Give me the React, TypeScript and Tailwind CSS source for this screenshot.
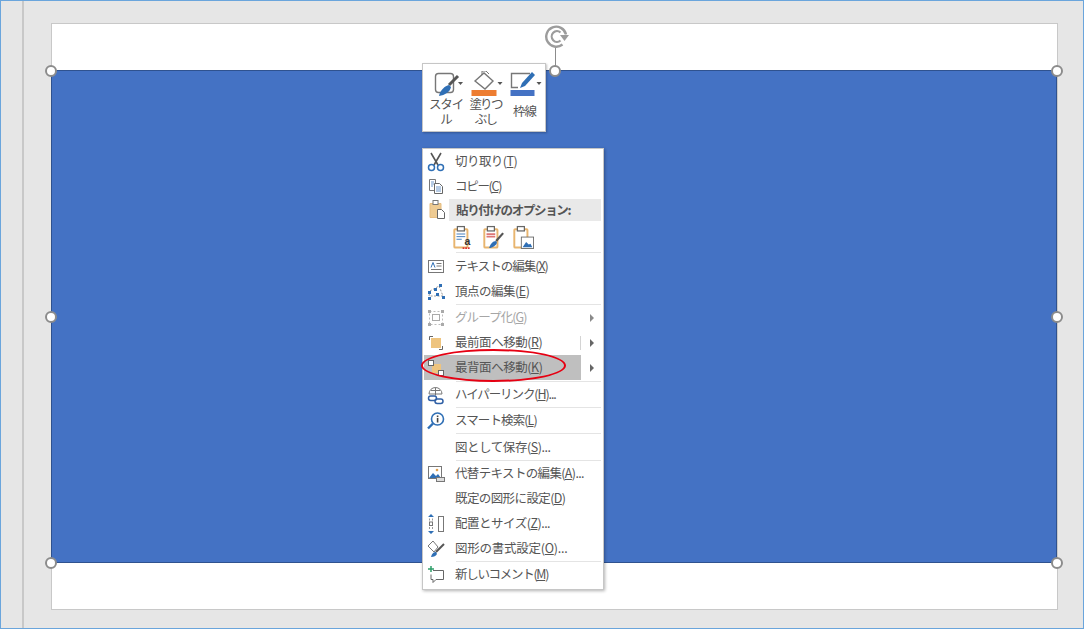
import React from "react";

const JP = "[font-family:'Noto_Sans_CJK_JP','Noto_Sans',sans-serif]";

const Clip = ({ children }: { children?: React.ReactNode }) => (
  <svg width="21" height="25" viewBox="0 0 24 28" className="shrink-0">
    <rect x="1.500" y="4.500" width="15" height="21" rx="1" fill="#fff" stroke="#e8b56f" strokeWidth="2.200" />
    <rect x="5" y="1.500" width="8" height="5" fill="#fff" stroke="#666" strokeWidth="1.400" />
    {children}
  </svg>
);

const icons: Record<string, React.ReactNode> = {
  cut: (
    <svg width="20" height="20" viewBox="0 0 20 20">
      <path d="M5 1l7 12M15 1L8 13" stroke="#555" strokeWidth="1.600" fill="none" />
      <circle cx="5.500" cy="15.500" r="3" fill="none" stroke="#2f6fb5" strokeWidth="1.500" />
      <circle cx="14.500" cy="15.500" r="3" fill="none" stroke="#2f6fb5" strokeWidth="1.500" />
    </svg>
  ),
  copy: (
    <svg width="20" height="20" viewBox="0 0 20 20">
      <path d="M3.500 2.500h6v11h-6z" fill="#fff" stroke="#777" />
      <path d="M8.500 6.500h5l3 3v7h-8z" fill="#fff" stroke="#666" />
      <path d="M10 10h5M10 12h5M10 14h5M5 5h3M5 7h3M5 9h2" stroke="#6f97c9" />
    </svg>
  ),
  paste: (
    <svg width="20" height="22" viewBox="0 0 20 22">
      <path d="M3 4.500h11v14H3z" fill="#eecb93" stroke="#e6bd80" />
      <rect x="6" y="1.500" width="5" height="4" fill="#fff" stroke="#777" />
      <path d="M10.500 10.500h4l3 3v6h-7z" fill="#fff" stroke="#666" />
    </svg>
  ),
  text: (
    <svg width="20" height="18" viewBox="0 0 20 18">
      <rect x="2.500" y="2.500" width="15" height="12" fill="#fff" stroke="#777" />
      <path d="M5 9.500l2-5 2 5" stroke="#2f6fb5" fill="none" />
      <path d="M10.500 5.500h5M10.500 8h5M5 11.500h10.500" stroke="#777" />
    </svg>
  ),
  nodes: (
    <svg width="20" height="20" viewBox="0 0 20 20">
      <path d="M4 9l9-5 4 10H3z" fill="none" stroke="#999" strokeDasharray="2 1.500" />
      <g fill="#2f6fb5">
        <rect x="2" y="9" width="3" height="3" />
        <rect x="13" y="2" width="3" height="3" />
        <rect x="16" y="14" width="3" height="3" />
        <rect x="2" y="15" width="3" height="3" />
        <rect x="8" y="6" width="3" height="3" />
        <rect x="10" y="11" width="3" height="3" />
      </g>
    </svg>
  ),
  group: (
    <svg width="20" height="20" viewBox="0 0 20 20">
      <rect x="3.500" y="3.500" width="13" height="13" fill="none" stroke="#bbb" strokeDasharray="2 2" />
      <rect x="6.500" y="6.500" width="7" height="6" fill="none" stroke="#aaa" />
      <g fill="#aaa">
        <rect x="2" y="2" width="3" height="3" />
        <rect x="15" y="2" width="3" height="3" />
        <rect x="2" y="15" width="3" height="3" />
        <rect x="15" y="15" width="3" height="3" />
      </g>
    </svg>
  ),
  front: (
    <svg width="20" height="20" viewBox="0 0 20 20">
      <path d="M3.500 7V3.500H7M13 16.500h3.500V13" fill="none" stroke="#666" />
      <rect x="5" y="5" width="10" height="10" fill="#eec47f" />
    </svg>
  ),
  back: (
    <svg width="20" height="20" viewBox="0 0 20 20">
      <rect x="6" y="6" width="9" height="9" fill="#eec47f" />
      <rect x="2.500" y="2.500" width="5" height="5" fill="#fff" stroke="#666" />
      <rect x="12.500" y="12.500" width="5" height="5" fill="#fff" stroke="#666" />
    </svg>
  ),
  link: (
    <svg width="20" height="22" viewBox="0 0 20 22">
      <path d="M3 10a6.500 6.500 0 0 1 13 0M9.500 3.500v8M5 6.500h9M3 10h13" fill="none" stroke="#777" />
      <rect x="2.500" y="12" width="8" height="4.500" rx="2.200" fill="none" stroke="#2f5fa5" strokeWidth="1.500" />
      <rect x="9" y="15" width="8" height="4.500" rx="2.200" fill="none" stroke="#2f5fa5" strokeWidth="1.500" />
    </svg>
  ),
  search: (
    <svg width="20" height="20" viewBox="0 0 20 20">
      <circle cx="11.500" cy="8" r="6" fill="#fff" stroke="#2f6fb5" strokeWidth="1.600" />
      <path d="M7 12.500l-5 5" stroke="#2f6fb5" strokeWidth="2.400" />
      <rect x="10.800" y="7" width="1.600" height="4.500" fill="#444" />
      <rect x="10.800" y="4.500" width="1.600" height="1.600" fill="#444" />
    </svg>
  ),
  alt: (
    <svg width="20" height="20" viewBox="0 0 20 20">
      <rect x="2.500" y="2.500" width="13" height="12" fill="#fff" stroke="#777" />
      <path d="M3 14l4-5 3 3 2-2 3 4z" fill="#2f6fb5" />
      <circle cx="11" cy="6" r="1.300" fill="#e0a050" />
      <rect x="10.500" y="13.500" width="8" height="4" fill="#ddd" stroke="#777" />
    </svg>
  ),
  size: (
    <svg width="20" height="22" viewBox="0 0 20 22">
      <path d="M5 1l-3 3h6zM5 21l-3-3h6z" fill="#2f6fb5" />
      <rect x="3.500" y="9" width="3" height="3.500" fill="none" stroke="#777" />
      <path d="M3.500 5.500v2M6.500 5.500v2M3.500 14v2M6.500 14v2" stroke="#999" />
      <rect x="12.500" y="3.500" width="5" height="15" fill="#fff" stroke="#777" />
    </svg>
  ),
  format: (
    <svg width="20" height="20" viewBox="0 0 20 20">
      <path d="M2 7l5-5 5 6-4 5z" fill="#fff" stroke="#777" />
      <path d="M18 5l-8 8" stroke="#555" strokeWidth="2" />
      <path d="M5 18c1-4 3-5 5-5l1 2c-1 2-3 3-6 3z" fill="#2f6fb5" />
    </svg>
  ),
  comment: (
    <svg width="20" height="20" viewBox="0 0 20 20">
      <path d="M7 5.500h10.500v9H10l-3 3v-3H5v-5" fill="#fff" stroke="#666" />
      <path d="M5 1v6M2 4h6" stroke="#2e9e6a" strokeWidth="1.500" />
    </svg>
  ),
};

type RowProps = {
  icon?: string;
  label: string;
  keyChar: string;
  tail?: string;
  track: string;
  h?: string;
  arrow?: boolean;
  disabled?: boolean;
  split?: boolean;
  active?: boolean;
};

const Row = ({ icon, label, keyChar, tail, track, h = "h-[25px]", arrow, disabled, split, active }: RowProps) => (
  <div className={`flex items-center pl-[1px] ${h}`}>
    <div className={`flex flex-1 h-full items-center ${active ? "bg-[#bfbfbf]" : ""}`}>
      <div className="w-[31px] shrink-0 flex items-center justify-center pr-[8px]">{icon ? icons[icon] : null}</div>
      <span className={`text-[12.5px] whitespace-nowrap ${track} ${disabled ? "text-[#a6a6a6]" : "text-[#555]"}`}>
        {label}(<span className="underline">{keyChar}</span>){tail}
      </span>
      <div className="flex-1" />
      {split && <div className="w-px h-[14px] bg-[#d4d4d4]" />}
    </div>
    {arrow ? (
      <div className="w-[21px] shrink-0 h-full flex items-center justify-center mr-[1px]">
        <div className={`w-0 h-0 border-y-[4px] border-y-transparent border-l-[4px] ${disabled ? "border-l-[#8a8a8a]" : "border-l-[#666]"}`} />
      </div>
    ) : null}
  </div>
);

const Sep = () => <div className="h-px ml-[33px] mr-[2px] bg-[#e4e4e4]" />;

const Handle = ({ pos }: { pos: string }) => (
  <div className={`absolute w-[12px] h-[12px] rounded-full bg-white border-2 border-[#8c8c8c] ${pos}`} />
);

const ToolBtn = ({ w, children, label, mt, track }: { w: string; children: React.ReactNode; label: React.ReactNode; mt: string; track: string }) => (
  <div className={`flex flex-col items-center ${w}`}>
    {children}
    <div className={`text-[12.5px] leading-[15px] text-center text-[#555] whitespace-nowrap ${track} ${mt}`}>{label}</div>
  </div>
);

export default function App() {
  return (
    <div className={`relative w-[1084px] h-[629px] overflow-hidden bg-[#e6e6e6] border border-[#6aa5dc] flex ${JP}`}>
      <div className="w-[23px] shrink-0 border-r-2 border-[#c8c8c8]" />
      <div className="pl-[27px] pt-[22px]">
        <div className="relative w-[1007px] h-[587px] bg-white border border-[#c8c8c8] pt-[46px]">
          <div className="h-[493px] -ml-px bg-[#4472c4] border border-[#2f528f]" />
          <Handle pos="left-[-7px] top-[41px]" />
          <Handle pos="left-[497px] top-[41px]" />
          <Handle pos="right-[-6px] top-[41px]" />
          <Handle pos="left-[-7px] top-[287px]" />
          <Handle pos="right-[-6px] top-[287px]" />
          <Handle pos="left-[-7px] top-[533px]" />
          <Handle pos="right-[-6px] top-[533px]" />
          <div className="absolute left-[503px] top-[22px] w-px h-[20px] bg-[#8c8c8c]" />
          <svg className="absolute left-[492px] top-[0px]" width="26" height="24" viewBox="0 0 26 24">
            <path d="M18.500 20.500a10 10 0 1 1 3.500-10" fill="none" stroke="#9c9c9c" strokeWidth="2.400" />
            <path d="M16.500 16.500a5.300 5.300 0 1 1 0-8" fill="none" stroke="#9c9c9c" strokeWidth="2.200" />
            <path d="M16 11h9l-4.500 6z" fill="#9c9c9c" />
          </svg>
        </div>
      </div>

      <div className="absolute left-[421px] top-[62px] w-[124px] h-[69px] bg-white border border-[#c6c6c6] shadow-[1px_1px_2px_rgba(0,0,0,0.25)] flex pt-[7px] pl-[3px]">
        <ToolBtn w="w-[40px]" mt="mt-[0px]" track="tracking-[-1.200px]" label={<>スタイ<br />ル</>}>
          <svg width="34" height="25" viewBox="0 0 34 25">
            <rect x="6.500" y="2.500" width="18" height="19" rx="3" fill="#fff" stroke="#777" strokeWidth="1.400" />
            <path d="M29 5l-9 9" stroke="#555" strokeWidth="3" />
            <path d="M10 25c1-6 6-10 10-11l2 2c-1 5-6 8-12 9z" fill="#2f6fb5" />
            <path d="M29 11h5l-2.500 3z" fill="#555" />
          </svg>
        </ToolBtn>
        <ToolBtn w="w-[39px]" mt="mt-[0px]" track="tracking-[-1.800px]" label={<>塗りつ<br />ぶし</>}>
          <svg width="34" height="25" viewBox="0 0 34 25">
            <path d="M6 10l9-8 9 8-8 8z" fill="#fff" stroke="#777" strokeWidth="1.400" />
            <path d="M13 4V0h4l3 3" fill="none" stroke="#777" />
            <rect x="2.500" y="19" width="25" height="6" fill="#ed7d31" />
            <path d="M28.500 11h5l-2.500 3z" fill="#555" />
          </svg>
        </ToolBtn>
        <ToolBtn w="w-[39px]" mt="mt-[7px]" track="tracking-[-1px]" label="枠線">
          <svg width="34" height="25" viewBox="0 0 34 25">
            <path d="M22 2.500H3.500v14H10" fill="none" stroke="#777" strokeWidth="1.400" />
            <path d="M24 1l-10 11-2 5 5-2L27 4z" fill="#2f6fb5" />
            <rect x="2.500" y="19" width="24" height="6" fill="#4472c4" />
            <path d="M28.500 11h5l-2.500 3z" fill="#555" />
          </svg>
        </ToolBtn>
      </div>

      <div className="absolute left-[421px] top-[147px] w-[182px] h-[442px] bg-white border border-[#c6c6c6] shadow-[1px_1px_3px_rgba(0,0,0,0.3)]">
        <Row icon="cut" label="切り取り" keyChar="T" track="tracking-[-0.550px]" />
        <Row icon="copy" label="コピー" keyChar="C" track="tracking-[-1.300px]" />
        <div className="flex h-[22px] items-center pl-[1px]">
          <div className="w-[25px] shrink-0 flex justify-center">{icons.paste}</div>
          <div className="flex-1 h-full mr-[2px] pl-[7px] bg-[#e9e9e9] flex items-center text-[12.5px] font-bold text-[#555] tracking-[-1.350px] whitespace-nowrap">貼り付けのオプション:</div>
        </div>
        <div className="flex h-[31px] items-center gap-[9px] pl-[30px] pt-[2px]">
          <Clip>
            <path d="M4 10h10M4 13h10M4 16h6" stroke="#2f6fb5" />
            <text x="13" y="22" fontSize="12" fontWeight="700" fill="#333" fontFamily="Liberation Sans">a</text>
            <path d="M11 26h2M14 26h2M17 26h2" stroke="#d33" strokeWidth="2" />
          </Clip>
          <Clip>
            <path d="M4 10h10M4 13h10" stroke="#d77" strokeWidth="2" />
            <path d="M23 9l-8 9" stroke="#555" strokeWidth="2.500" />
            <path d="M7 26c1-4 4-8 8-8l1 2c-1 3-5 6-9 6z" fill="#2f6fb5" />
          </Clip>
          <Clip>
            <rect x="9.500" y="13.500" width="14" height="13" fill="#fff" stroke="#666" />
            <path d="M11 25l4-6 3 3 2-1 2 4z" fill="#2f6fb5" />
          </Clip>
        </div>
        <Sep />
        <div className="h-[1px]" />
        <Row icon="text" label="テキストの編集" keyChar="X" track="tracking-[-1px]" />
        <Row icon="nodes" label="頂点の編集" keyChar="E" track="tracking-[-0.500px]" />
        <Sep />
        <Row icon="group" label="グループ化" keyChar="G" track="tracking-[-0.900px]" arrow disabled />
        <Row icon="front" label="最前面へ移動" keyChar="R" track="tracking-[-0.450px]" arrow split />
        <Row icon="back" label="最背面へ移動" keyChar="K" track="tracking-[-0.450px]" arrow active />
        <div className="h-[1px]" />
        <Sep />
        <Row icon="link" label="ハイパーリンク" keyChar="H" tail="..." track="tracking-[-1.100px]" />
        <Sep />
        <Row icon="search" label="スマート検索" keyChar="L" track="tracking-[-0.900px]" />
        <Sep />
        <Row label="図として保存" keyChar="S" tail="..." track="tracking-[-0.450px]" h="h-[26px]" />
        <Sep />
        <Row icon="alt" label="代替テキストの編集" keyChar="A" tail="..." track="tracking-[-0.650px]" />
        <Row label="既定の図形に設定" keyChar="D" track="tracking-[-0.600px]" />
        <Row icon="size" label="配置とサイズ" keyChar="Z" tail="..." track="tracking-[-0.500px]" />
        <Row icon="format" label="図形の書式設定" keyChar="O" tail="..." track="tracking-[-0.250px]" />
        <Sep />
        <Row icon="comment" label="新しいコメント" keyChar="M" track="tracking-[-1.300px]" />
      </div>

      <div className="absolute left-[420px] top-[348px] w-[145px] h-[33px] rounded-[50%] border-2 border-[#e60012]" />
    </div>
  );
}
